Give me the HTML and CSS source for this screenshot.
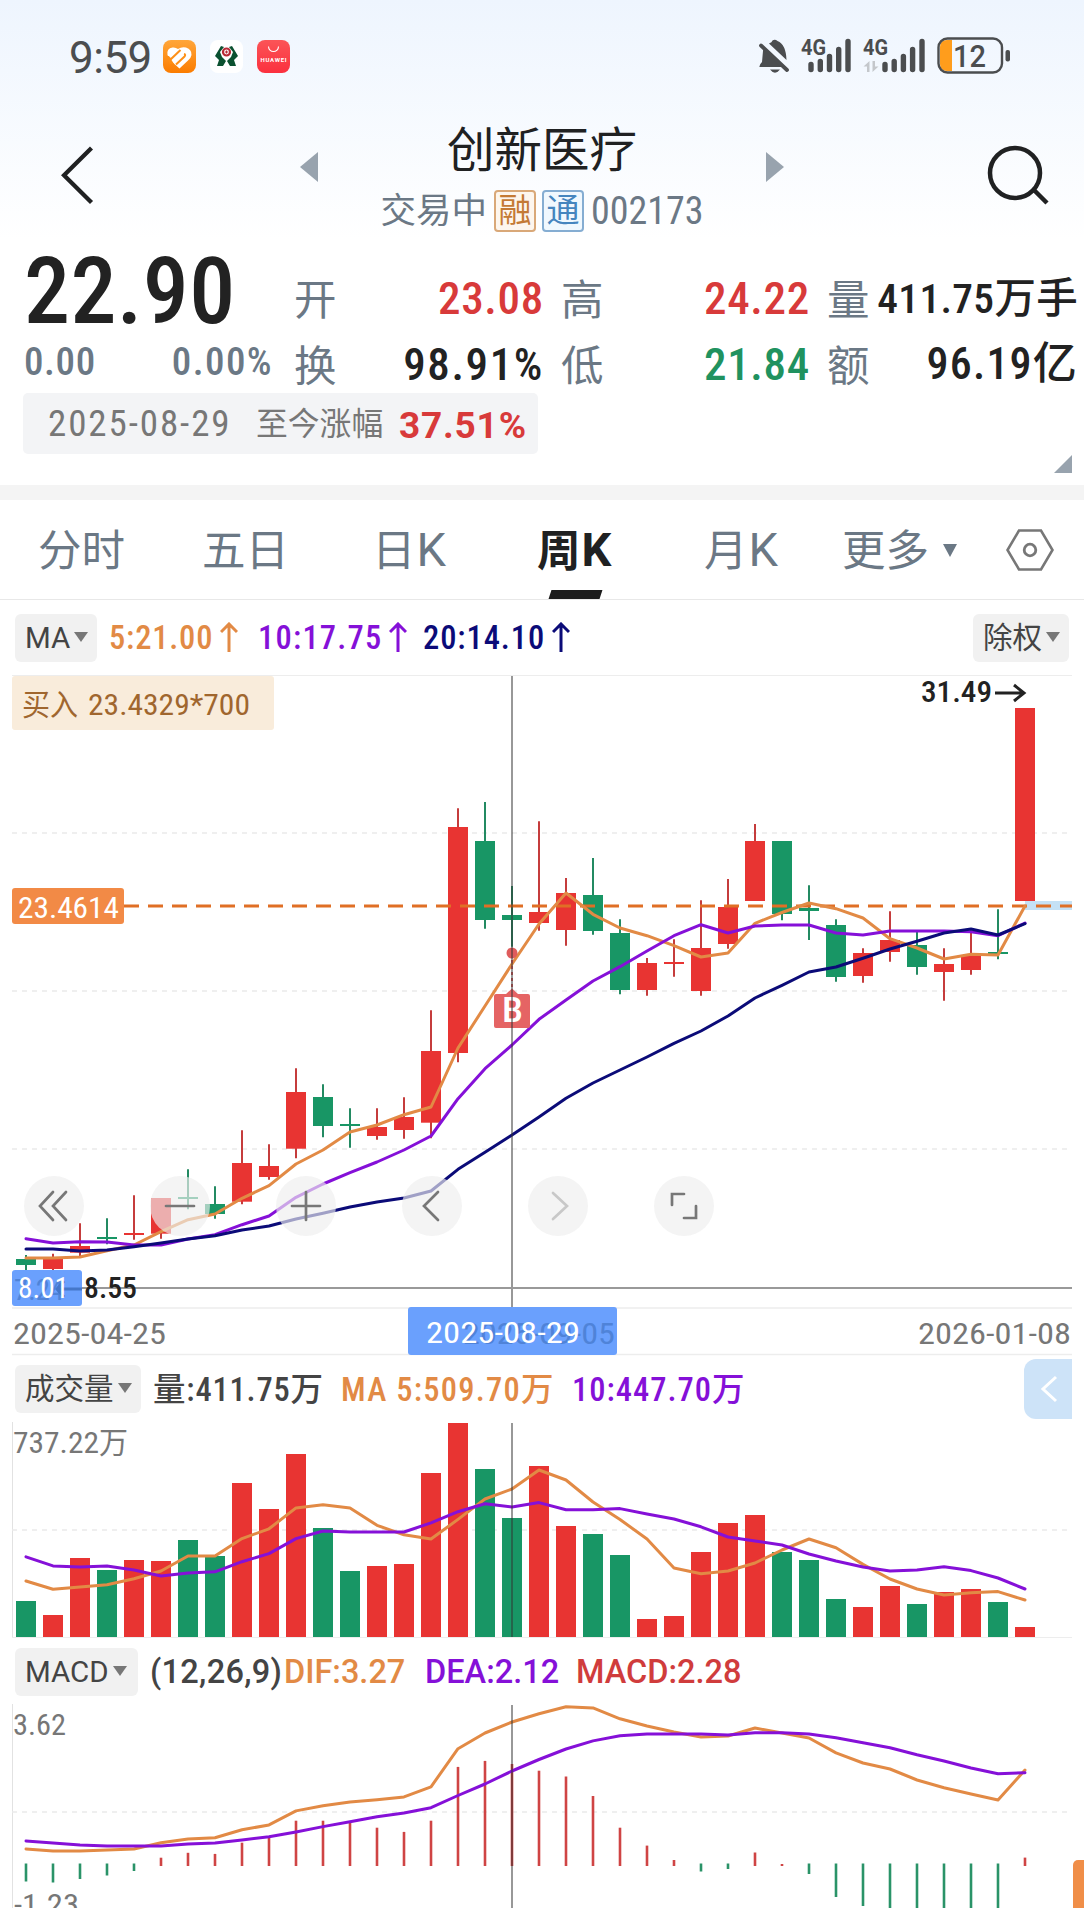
FILE: index.html
```html
<!DOCTYPE html>
<html lang="zh-CN">
  <head>
    <meta charset="UTF-8" />
    <meta name="viewport" content="width=device-width, initial-scale=1.0" />
    <title>创新医疗 002173</title>
    <link rel="stylesheet" href="styles.css">
  </head>
  <body>
    <div class="top">
      <div class="status-bar">
        <span class="time">9:59</span>
        <div class="app-icons">
          <svg width="33" height="33" viewBox="0 0 33 33">
            <defs>
              <linearGradient id="orangeBg" x1="0" y1="0" x2="0" y2="1">
                <stop offset="0" stop-color="#ffa63a" />
                <stop offset="1" stop-color="#fb7c00" />
              </linearGradient>
              <linearGradient id="redBg" x1="0" y1="0" x2="0" y2="1">
                <stop offset="0" stop-color="#fb5457" />
                <stop offset="1" stop-color="#fb303e" />
              </linearGradient>
            </defs>
            <rect width="33" height="33" rx="8" fill="url(#orangeBg)" />
            <path d="M4.500 15Q3.500 8 9.500 7.500 12.500 7 15 9 18.500 6.500 23 7.500 29 9.500 28.500 15 28 18 25 20.500L16.500 28.500 8 21Z" fill="#fff" />
            <path d="M3.500 17.500 8 19 17.500 10M13 24.500 21.500 16.500Q23 14.500 21 14" fill="none" stroke="#fe9017" stroke-width="2" />
            <path d="M3 16 6 16 11 24H7Z" fill="#fe8e14" />
          </svg>
          <svg width="33" height="33" viewBox="0 0 33 33">
            <rect width="33" height="33" rx="8" fill="#fff" />
            <path d="M11 6 5 16 9 20 7 26H13L16 21 12 17 10 12 14 7ZM22 6 28 16 24 20 26 26H20L17 21 21 17 23 12 19 7Z" fill="#0b5130" />
            <circle cx="16.500" cy="12" r="3.500" fill="#fff" stroke="#b92a36" stroke-width="2.200" />
            <path d="M16.500 10.500v3M15 12h3" stroke="#b92a36" stroke-width="1.200" />
          </svg>
          <svg width="33" height="33" viewBox="0 0 33 33">
            <rect width="33" height="33" rx="8" fill="url(#redBg)" />
            <path d="M11.500 6.500a5 5 0 0 0 10 0" fill="none" stroke="#fff" stroke-width="1.100" />
            <text class="tiny-logo" x="16.500" y="21.500" text-anchor="middle" textLength="26">HUAWEI</text>
          </svg>
        </div>
        <svg class="status-icons" width="256" height="40" viewBox="757 36 256 40">
          <path d="M763 51Q763 48 765 50L783 67H759.500Q759 65 762 62ZM769 43.500Q772 42.500 772.500 40.500 775 39 777.500 41 786 44.500 786.500 60ZM770 69.500H780Q775 76 770 69.500Z" fill="#4b4d4f" />
          <path d="M761 45.500 787 70" stroke="#4b4d4f" stroke-width="3.800" stroke-linecap="round" />
          <text class="net" x="801" y="55" textLength="25" lengthAdjust="spacingAndGlyphs">4G</text>
          <text class="net" x="863" y="55" textLength="25" lengthAdjust="spacingAndGlyphs">4G</text>
          <g stroke="#4b4d4f" stroke-width="5.400" stroke-linecap="round">
            <path d="M811 64.500V69.500M820.300 61.500V69.500M829.500 56.500V69.500M838.700 49.500V69.500M848 41.500V69.500" />
            <path d="M885 64.500V69.500M894.200 61.500V69.500M903.400 56.500V69.500M912.600 49.500V69.500M922 41.500V69.500" />
          </g>
          <path d="M863.500 66.500 869.500 61V72H867V66.500ZM878.500 66.500 872.500 72V61H875V66.500Z" fill="#c4c7cb" />
          <path d="M952 40H947Q940 40 940 47V64Q940 71 947 71H952Z" fill="#ff9d1c" />
          <rect x="938.500" y="38.500" width="63.500" height="34" rx="9" fill="none" stroke="#4b4d4f" stroke-width="2.400" />
          <rect x="1005.500" y="50" width="4.500" height="11.500" rx="2" fill="#4b4d4f" />
          <text class="battery" x="953" y="67" textLength="33" lengthAdjust="spacingAndGlyphs">12</text>
        </svg>
      </div>

      <div class="header">
        <svg width="34" height="60" viewBox="0 0 34 60">
          <path d="M30.500 3 3 30.300 30.500 57.500" fill="none" stroke="#202122" stroke-width="4.300" />
        </svg>
        <svg class="prev" width="18" height="30" viewBox="0 0 18 30"><path d="M18 0V30L0 15Z" fill="#98a3ae" /></svg>
        <div class="title">
          <div class="name">创新医疗</div>
          <div class="sub">
            <span>交易中</span>
            <span class="tag tag-rong">融</span>
            <span class="tag tag-tong">通</span>
            <span class="num code">002173</span>
          </div>
        </div>
        <svg class="next" width="18" height="30" viewBox="0 0 18 30"><path d="M0 0V30L18 15Z" fill="#98a3ae" /></svg>
        <svg width="62" height="60" viewBox="0 0 62 60">
          <circle cx="28" cy="28" r="25" fill="none" stroke="#202122" stroke-width="4.500" />
          <path d="M46 44 60 58" stroke="#202122" stroke-width="4.500" />
        </svg>
      </div>
    </div>

    <div class="quote">
      <div class="quote-grid">
        <div class="last">
          <div class="num price">22.90</div>
          <div class="num change"><span>0.00</span><span>0.00%</span></div>
        </div>
        <div class="stats">
          <div class="stat"><label>开</label><span class="num up">23.08</span></div>
          <div class="stat"><label>换</label><span class="num turnover">98.91%</span></div>
        </div>
        <div class="stats">
          <div class="stat"><label>高</label><span class="num up">24.22</span></div>
          <div class="stat"><label>低</label><span class="num down">21.84</span></div>
        </div>
        <div class="stats">
          <div class="stat"><label>量</label><span class="num vol">411.75万手</span></div>
          <div class="stat"><label>额</label><span class="num amount">96.19亿</span></div>
        </div>
      </div>
      <div class="since">
        <span class="num since-date">2025-08-29</span>
        <span class="since-label">至今涨幅</span>
        <span class="since-pct">37.51%</span>
      </div>
      <div class="corner"></div>
    </div>

    <div class="tabs">
      <span class="tab">分时</span>
      <span class="tab">五日</span>
      <span class="tab">日<span class="k">K</span></span>
      <span class="tab active">周<span class="k">K</span></span>
      <span class="tab">月<span class="k">K</span></span>
      <span class="tab more">更多<i class="caret"></i></span>
      <svg width="48" height="42" viewBox="0 0 48 42">
        <path d="M13 1.500H35L46.500 21 35 40.500H13L1.500 21Z" fill="none" stroke="#777" stroke-width="2.600" />
        <circle cx="24" cy="21" r="5.800" fill="none" stroke="#777" stroke-width="2.800" />
      </svg>
    </div>

    <div class="legend legend-ma">
      <span class="pill pill-ma">MA<i class="caret"></i></span>
      <span class="num orange w-ma5">5:21.00<svg class="arrow" viewBox="0 0 18 30"><path d="M9 30V2M1 10 9 2 17 10" /></svg></span>
      <span class="num purple w-ma10">10:17.75<svg class="arrow" viewBox="0 0 18 30"><path d="M9 30V2M1 10 9 2 17 10" /></svg></span>
      <span class="num navy w-ma20">20:14.10<svg class="arrow" viewBox="0 0 18 30"><path d="M9 30V2M1 10 9 2 17 10" /></svg></span>
      <span class="pill pill-right">除权<i class="caret"></i></span>
    </div>
    <svg id="kline" class="chart" width="1084" height="681" viewBox="0 675 1084 681"></svg>

    <div class="legend legend-vol">
      <span class="pill pill-vol">成交量<i class="caret"></i></span>
      <span class="num dark w-vol">量:411.75万</span>
      <span class="num orange w-vol5">MA 5:509.70万</span>
      <span class="num purple w-vol10">10:447.70万</span>
      <span class="drawer">
        <svg width="18" height="28" viewBox="0 0 18 28"><path d="M16 2 3 14 16 26" fill="none" stroke="#fff" stroke-width="3" /></svg>
      </span>
    </div>
    <svg id="volume" class="chart" width="1084" height="217" viewBox="0 1422 1084 217"></svg>

    <div class="legend legend-macd">
      <span class="pill pill-macd">MACD<i class="caret"></i></span>
      <span class="dark w-param">(12,26,9)</span>
      <span class="orange w-dif">DIF:3.27</span>
      <span class="purple w-dea">DEA:2.12</span>
      <span class="red">MACD:2.28</span>
    </div>
    <svg id="macd" class="chart" width="1084" height="204" viewBox="0 1704 1084 204"></svg>

    <script src="script.js"></script>
  </body>
</html>
```

FILE: styles.css
```css
* {
  box-sizing: border-box;
}

body {
  margin: 0;
  width: 1084px;
  height: 1908px;
  overflow: hidden;
  background-color: #fff;
  color: #222;
  font-family: Roboto, "Noto Sans CJK SC", sans-serif;
}

svg {
  display: block;
  flex: none;
}

.num {
  font-stretch: 87.5%;
  white-space: nowrap;
}

.top {
  height: 240px;
  background: linear-gradient(#eef5fe, #fff);
}

/* status bar */
.status-bar {
  display: flex;
  height: 100px;
  padding: 36px 71px 0 69px;
}

.time {
  width: 94px;
  font-size: 44px;
  line-height: 44px;
  letter-spacing: -0.500px;
  color: #4b4d4f;
}

.app-icons {
  display: flex;
  gap: 14px;
  padding-top: 4px;
}

.status-icons {
  margin-left: auto;
}

.tiny-logo {
  font-size: 6px;
  font-weight: 700;
  fill: #fff;
}

.net {
  font-size: 22px;
  font-weight: 700;
  fill: #4b4d4f;
}

.battery {
  font-size: 32px;
  font-weight: 500;
  fill: #4b4d4f;
}

/* title */
.header {
  display: flex;
  height: 140px;
  padding: 45px 35px 0 61px;
}

.prev {
  margin: 7px 0 0 205px;
}

.next {
  margin-top: 7px;
}

.header svg:last-child {
  margin-left: auto;
}

.title {
  width: 448px;
  margin-top: -25px;
  text-align: center;
}

.name {
  font-size: 47.500px;
  line-height: 62px;
  color: #202122;
}

.sub {
  display: flex;
  justify-content: center;
  align-items: center;
  height: 58px;
  font-size: 35.500px;
  line-height: 44px;
  color: #6b7885;
}

.sub > span:first-child {
  margin-right: 7px;
}

.tag {
  width: 42px;
  height: 42px;
  border: 2px solid;
  border-radius: 4px;
  font-size: 33px;
  line-height: 38px;
}

.tag-rong {
  color: #c47a35;
  border-color: #d9a878;
  background-color: #fdf6ee;
}

.tag-tong {
  margin: 0 7px 0 6px;
  color: #4585be;
  border-color: #85add2;
  background-color: #f0f8fe;
}

.code {
  font-size: 38px;
}

/* quote */
.quote {
  position: relative;
  height: 260px;
  border-bottom: 15px solid #f4f4f4;
}

.quote-grid {
  display: grid;
  grid-template-columns: 249px 254px 249px 251px;
  column-gap: 17px;
  height: 153px;
  padding-left: 24px;
}

.price {
  height: 100px;
  font-size: 92px;
  line-height: 103px;
  font-weight: 500;
  letter-spacing: 0.400px;
}

.change {
  display: flex;
  justify-content: space-between;
  font-size: 39px;
  line-height: 44px;
  font-weight: 500;
  letter-spacing: 0.600px;
  color: #6b7885;
}

.change span:last-child {
  letter-spacing: 1.400px;
}

.stats {
  padding-top: 26px;
}

.stats:nth-child(2) {
  margin-left: 4px;
}

.stat {
  display: flex;
  justify-content: space-between;
  height: 66px;
  line-height: 65px;
  font-size: 45px;
  font-weight: 500;
  letter-spacing: 0.700px;
}

.stat label {
  padding-top: 2px;
  font-size: 42.500px;
  font-weight: 400;
  letter-spacing: 0;
  color: #6b7885;
}

.stat .turnover {
  letter-spacing: 1.600px;
}

.stat .vol {
  font-size: 41.500px;
  letter-spacing: 0.300px;
}

.stat .amount {
  font-size: 44px;
  letter-spacing: 1.200px;
}

.up {
  color: #d83a3a;
}

.down {
  color: #20925f;
}

.since {
  display: flex;
  align-items: center;
  width: 515px;
  height: 61px;
  margin-left: 23px;
  padding-left: 25px;
  border-radius: 5px;
  background-color: #f3f4f6;
  color: #777;
}

.since-date {
  width: 208px;
  font-size: 37px;
  letter-spacing: 1.900px;
}

.since-label {
  width: 143px;
  font-size: 31.800px;
  line-height: 56px;
}

.since-pct {
  padding-top: 3px;
  font-size: 37px;
  font-weight: 700;
  letter-spacing: 0.800px;
  color: #d83a3a;
}

.corner {
  position: absolute;
  right: 12px;
  bottom: 12px;
  border-left: 18px solid transparent;
  border-bottom: 18px solid #98a3ae;
}

/* period tabs */
.tabs {
  display: flex;
  align-items: center;
  height: 100px;
  padding-left: 38px;
  border-bottom: 1px solid #e8e8e8;
  font-size: 43.500px;
  color: #6b7885;
}

.tab {
  position: relative;
  width: 164px;
  height: 99px;
  line-height: 103px;
  white-space: nowrap;
}

.tab:nth-child(2) {
  width: 170px;
}

.tab:nth-child(3) {
  width: 165px;
}

.tab.active {
  width: 167px;
  font-weight: 700;
  color: #202122;
}

.tab.active::after {
  content: "";
  position: absolute;
  left: 13px;
  bottom: 0;
  width: 51px;
  height: 9px;
  background-color: #1c1c1c;
  transform: skewX(-18deg);
}

.tab:nth-child(5) {
  width: 138px;
}

.k {
  margin-left: 1px;
  font-size: 47px;
  line-height: 1;
}

.caret {
  display: inline-block;
  margin-left: 4px;
  border: 7px solid transparent;
  border-top: 10px solid #777;
  border-bottom: 0;
  vertical-align: 6px;
}

.more .caret {
  margin-left: 14px;
  border-width: 13px 7.500px 0;
  border-top-color: #6b7885;
  vertical-align: 9px;
}

/* indicator legends */
.legend {
  display: flex;
  align-items: center;
  padding-left: 15px;
  font-size: 32.500px;
  font-weight: 500;
}

.legend-ma {
  height: 75px;
  line-height: 36px;
}

.legend-vol {
  height: 66px;
  line-height: 36px;
}

.legend-vol .num {
  margin-top: 1px;
}

.legend-macd {
  height: 65px;
  line-height: 66px;
}

.pill {
  height: 48px;
  padding-left: 10px;
  border-radius: 6px;
  background-color: #f1f1f1;
  font-size: 29.500px;
  line-height: 49px;
  font-weight: 400;
  color: #444;
  white-space: nowrap;
}

.pill-ma {
  width: 82px;
  margin-right: 12px;
}

.pill-right {
  width: 96px;
  margin: 0 15px 0 auto;
}

.pill-vol {
  width: 126px;
  margin-right: 12px;
}

.pill-macd {
  width: 123px;
  margin-right: 12px;
}

.arrow {
  display: inline-block;
  width: 18px;
  height: 30px;
  margin-left: 7px;
  vertical-align: -3px;
  fill: none;
  stroke: currentColor;
  stroke-width: 3;
}

.w-ma5 {
  width: 149px;
  letter-spacing: 0.800px;
}

.w-ma10 {
  width: 165px;
  letter-spacing: 1.200px;
}

.w-ma20 {
  letter-spacing: 0.900px;
}

.w-vol {
  width: 188px;
  letter-spacing: 0.800px;
}

.w-vol5 {
  width: 231px;
  letter-spacing: 1.250px;
}

.w-vol10 {
  letter-spacing: 1px;
}

.w-param {
  width: 134px;
  letter-spacing: 0.300px;
}

.w-dif {
  width: 141px;
}

.w-dea {
  width: 151px;
}

.orange {
  color: #e28a45;
}

.purple {
  color: #8510d8;
}

.navy {
  color: #0b0b78;
}

.red {
  color: #d03c3c;
}

.dark {
  color: #444;
}

.drawer {
  display: flex;
  align-items: center;
  width: 48px;
  height: 60px;
  margin: 0 12px 0 auto;
  padding-left: 16px;
  border-radius: 12px 0 0 12px;
  background-color: #cde3f8;
}

/* charts */
.chart text {
  font-size: 30px;
  font-stretch: 87.5%;
  fill: #777;
}

.chart .dark-text {
  font-weight: 500;
  fill: #222;
}

.chart .tag-text {
  fill: #fff;
}

.chart .buy-text {
  fill: #a0662e;
}

.chart .ghost-text {
  fill: #4f83d8;
}

.chart .mark-text {
  font-size: 35px;
  font-weight: 500;
  fill: #fff;
}
```

FILE: script.js
```javascript
const RED = "#e83432";
const GREEN = "#189665";
const ORANGE = "#e28a45";
const PURPLE = "#8510d8";
const NAVY = "#0b0b78";

// [direction, high, body top, body bottom, low]
const candles = [
  ["g", 1255, 1259, 1265, 1270], ["r", 1253.7, 1258.7, 1269, 1274.3],
  ["r", 1223.3, 1246, 1252.7, 1258], ["g", 1218.3, 1237, 1239, 1244.3],
  ["r", 1195.3, 1233, 1235, 1239.7], ["r", 1198, 1198, 1233.7, 1238.7],
  ["g", 1169.3, 1197, 1199, 1209.3], ["g", 1186.3, 1204, 1214, 1218.7],
  ["r", 1130.3, 1163, 1201.7, 1204.3], ["r", 1144.3, 1166, 1177, 1179.7],
  ["r", 1068.3, 1092, 1148.7, 1158.3], ["g", 1084.3, 1097, 1126, 1137.3],
  ["g", 1108.3, 1124, 1126, 1147.7], ["r", 1108.3, 1127, 1136, 1139.7],
  ["r", 1097.3, 1117, 1130, 1138.7], ["r", 1010.3, 1051, 1122.7, 1138.3],
  ["r", 808.3, 827, 1053, 1062.3], ["g", 802, 841, 920, 928.7],
  ["g", 886, 915, 920, 946.7], ["r", 821.3, 912, 923, 930.7],
  ["r", 878, 893, 930, 945.7], ["g", 858, 895, 931, 934.7],
  ["g", 919.3, 933, 990, 994.3], ["r", 958, 963, 990, 995.7],
  ["r", 939.3, 962, 964, 976.7], ["r", 900.3, 948, 991, 995.7],
  ["r", 879, 907, 944, 948.7], ["r", 824, 841, 901, 901],
  ["g", 841, 841, 914, 920.3], ["g", 885.3, 908, 911, 940],
  ["g", 919.3, 925, 977, 981.7], ["r", 948.3, 953, 976, 982.7],
  ["r", 911.3, 940, 952, 961.7], ["g", 930.7, 945, 967, 974.7],
  ["r", 948.3, 964, 972, 1000.7], ["r", 930.7, 956, 970, 974.7],
  ["g", 909.3, 952, 954, 959.3], ["r", 708, 708, 901, 901],
];

const ma5 = [1258, 1258, 1257, 1250.7, 1245, 1231.7, 1219.7, 1214, 1198.3, 1185.7, 1164, 1150, 1132, 1125, 1114.7, 1107, 1048, 1006, 964, 924, 893, 914.3, 928, 935.7, 945.7, 957, 953, 923.3, 912.5, 903, 908.7, 918, 938.7, 948, 959, 954.3, 955, 906];
const ma10 = [1238.7, 1243, 1241.7, 1242, 1245, 1245, 1239, 1234.7, 1224.7, 1216, 1197.3, 1184, 1172.7, 1162, 1150, 1136, 1098.7, 1068.7, 1045, 1019.3, 1000, 981, 966.7, 951, 935.7, 924.7, 933, 926, 925, 925, 933, 935, 931, 931, 931, 931.7, 935.7, 923];
const ma20 = [1249, 1249, 1251, 1250, 1246.7, 1243, 1239, 1235.7, 1230, 1226, 1219, 1213.3, 1207, 1202, 1198, 1191, 1169.3, 1152.3, 1135, 1117, 1098.3, 1083, 1070, 1057, 1043.3, 1031, 1016, 998, 985.3, 972, 967, 958.3, 949, 941.3, 933, 929, 935, 923.7];

const volTops = [1601, 1615, 1558, 1570, 1560, 1561, 1540, 1556, 1483, 1509, 1454, 1528, 1571, 1566, 1564, 1473, 1423, 1469, 1518, 1466, 1526, 1534, 1555, 1619, 1616, 1552, 1523, 1515, 1552, 1560, 1599, 1607, 1586, 1604, 1592, 1589, 1602, 1627];
const vol5 = [1581, 1589.3, 1587, 1584.7, 1578.8, 1571, 1556, 1556, 1538.6, 1528.8, 1507.9, 1504.7, 1508, 1525.3, 1534.8, 1539, 1519.4, 1499, 1489, 1470, 1480, 1502, 1519.5, 1539, 1568, 1573.8, 1571, 1563, 1550, 1539, 1547.8, 1564.4, 1579, 1589, 1595, 1592.8, 1591.6, 1600];
const vol10 = [1556.8, 1565.9, 1567, 1566, 1570, 1576, 1572.9, 1571.8, 1561.7, 1553.6, 1538.6, 1531, 1532, 1532, 1532, 1522.9, 1511.7, 1503.7, 1507, 1502.6, 1509.8, 1509.8, 1508.6, 1514, 1519, 1526.8, 1537, 1541, 1545, 1554, 1561, 1567, 1571, 1570, 1566.8, 1570.6, 1578, 1589];

const macdEnds = [1881.5, 1882.5, 1879, 1875.5, 1871, 1857.7, 1852.8, 1853.9, 1842.7, 1838, 1820.7, 1820.7, 1823, 1827.7, 1831.9, 1820.7, 1766.9, 1760.9, 1764, 1770.7, 1776.5, 1796, 1827.7, 1845.6, 1860, 1871.5, 1869, 1852.5, 1864, 1874, 1897, 1906, 1920, 1920, 1920, 1920, 1920, 1857.6];
const dif = [1849, 1851, 1851, 1850, 1849, 1842.7, 1838.9, 1837.8, 1829.8, 1824.9, 1810.9, 1805.7, 1802, 1799.7, 1796.9, 1786.8, 1748.7, 1733, 1722, 1713.7, 1706.7, 1707.9, 1718.8, 1726, 1732, 1737, 1736, 1728, 1733, 1738, 1752.9, 1763, 1769, 1780, 1787.8, 1794, 1800, 1770];
const dea = [1841, 1843, 1845, 1846, 1846, 1846, 1844, 1843, 1839.9, 1836.8, 1831.9, 1826.6, 1821.7, 1816.8, 1813, 1807.7, 1795.5, 1784, 1771, 1759.5, 1749, 1740.9, 1735.8, 1733.9, 1733.9, 1733.9, 1735, 1732.7, 1732.7, 1734, 1737.8, 1742.8, 1747.8, 1754.8, 1761, 1768, 1773.8, 1772.7];

const xAt = (i) => 26 + 27 * i;

function rect(x, y, w, h, fill, extra = "") {
  return `<rect x="${x}" y="${y}" width="${w}" height="${h}" fill="${fill}" ${extra}/>`;
}

function line(x1, y1, x2, y2, color, width = 2, extra = "") {
  return `<line x1="${x1}" y1="${y1}" x2="${x2}" y2="${y2}" stroke="${color}" stroke-width="${width}" ${extra}/>`;
}

function series(values, color) {
  const points = values.map((y, i) => `${xAt(i)},${y}`).join(" ");
  return `<polyline points="${points}" fill="none" stroke="${color}" stroke-width="3" stroke-linecap="round" stroke-linejoin="round"/>`;
}

function label(x, y, text, width, cls = "") {
  return `<text x="${x}" y="${y}" textLength="${width}" lengthAdjust="spacingAndGlyphs" class="${cls}">${text}</text>`;
}

const grid = (y) => line(12, y, 1072, y, "#eaeaea", 1.5, 'stroke-dasharray="5 5"');
const cursor = (y1, y2) => line(512, y1, 512, y2, "#333", 2, 'opacity="0.5"');

function drawKline() {
  let s = line(12, 675.5, 1072, 675.5, "#ededed", 1);
  s += grid(833) + grid(991) + grid(1149);
  s += line(12, 1308, 1072, 1308, "#ededed", 1.5) + line(12, 1354.5, 1072, 1354.5, "#ededed", 1.5);
  s += rect(1025, 901, 47, 9, "#c5e1f5");

  candles.forEach(([dir, high, top, bottom, low], i) => {
    const color = dir === "r" ? RED : GREEN;
    s += line(xAt(i), high, xAt(i), low, dir === "r" ? "#c53c3c" : "#238a62", 2);
    s += rect(xAt(i) - 10, top, 20, bottom - top, color);
  });

  s += line(124, 906, 1072, 906, "#e06f25", 3, 'stroke-dasharray="15 9"');
  s += series(ma5, ORANGE) + series(ma10, PURPLE) + series(ma20, NAVY);

  // buy marker
  s += `<circle cx="512" cy="953" r="5.5" fill="#df5c5c"/>`;
  s += line(512, 960, 512, 988, "#df5c5c", 2, 'stroke-dasharray="3 3"');
  s += `<path d="M496 994H506L512 988.5 518 994H528Q530 994 530 996V1026Q530 1028 528 1028H496Q494 1028 494 1026V996Q494 994 496 994Z" fill="#e56464"/>`;
  s += label(502, 1022, "B", 21, "mark-text");

  s += cursor(676, 1308) + line(82, 1288, 1072, 1288, "#999", 2);
  s += rect(12, 676, 262, 54, "#f9ecdb", 'rx="3"');
  s += label(22, 715, "买入", 56, "buy-text") + label(88, 715, "23.4329*700", 162, "buy-text");
  s += label(921, 702, "31.49", 71, "dark-text");
  s += `<path d="M995 693H1024M1014 685 1024 693 1014 701" fill="none" stroke="#222" stroke-width="3"/>`;
  s += rect(12, 888, 112, 36, "#f28a46", 'rx="3"') + label(18, 918, "23.4614", 101, "tag-text");

  // crosshair labels
  s += rect(12, 1270, 70, 36, "#6aa0fd", 'rx="3"');
  s += label(14, 1300, "7.24", 50, "ghost-text");
  s += `<path d="M82 1289H58M64 1281 57 1289 64 1297" fill="none" stroke="#4577c9" stroke-width="3"/>`;
  s += label(18, 1298, "8.01", 51, "tag-text") + label(84, 1298, "8.55", 53, "dark-text");
  s += label(13, 1344, "2025-04-25", 153) + label(918, 1344, "2026-01-08", 153);
  s += rect(408, 1307, 209, 48, "#6aa0fd", 'rx="3"');
  s += label(463, 1344, "2025-09-05", 152, "ghost-text") + label(426, 1343, "2025-08-29", 154, "tag-text");

  // round tool buttons
  const icons = [
    "M53 1192 40 1206 53 1220M66 1192 53 1206 66 1220",
    "M166 1206H194",
    "M292 1206H320M306 1192V1220",
    "M438 1192 424 1206 438 1220",
    "M553 1193 567 1206 553 1219",
    "M672 1205V1194H684M696 1206V1218H684",
  ];
  icons.forEach((d, i) => {
    s += `<circle cx="${54 + 126 * i}" cy="1206" r="30" fill="#eeeeee" fill-opacity="0.66"/>`;
    s += `<path d="${d}" fill="none" stroke="${i === 4 ? "#c8c8c8" : "#777"}" stroke-width="2.7" stroke-linecap="round"/>`;
  });
  document.getElementById("kline").innerHTML = s;
}

function drawVolume() {
  let s = line(12.5, 1422, 12.5, 1638, "#e2e2e2", 1) + line(12, 1637.5, 1072, 1637.5, "#ededed", 1);
  s += grid(1530);
  volTops.forEach((y, i) => {
    s += rect(xAt(i) - 10, y, 20, 1637 - y, candles[i][0] === "r" ? RED : GREEN);
  });
  s += series(vol5, ORANGE) + series(vol10, PURPLE) + cursor(1423, 1637);
  s += label(13, 1453, "737.22", 86) + label(99, 1453, "万", 29);
  document.getElementById("volume").innerHTML = s;
}

function drawMacd() {
  let s = line(12.5, 1704, 12.5, 1908, "#e2e2e2", 1) + grid(1812);
  macdEnds.forEach((y, i) => {
    const up = y < 1865;
    s += line(xAt(i), up ? 1866 : 1863.5, xAt(i), y, up ? "#cf4444" : "#2a9368", 2.6);
  });
  s += series(dif, ORANGE) + series(dea, PURPLE) + cursor(1705, 1908);
  s += label(13, 1735, "3.62", 53) + label(14, 1915, "-1.23", 65);
  s += rect(1073, 1860, 16, 60, "#f08e48", 'rx="5"');
  document.getElementById("macd").innerHTML = s;
}

drawKline();
drawVolume();
drawMacd();
```
